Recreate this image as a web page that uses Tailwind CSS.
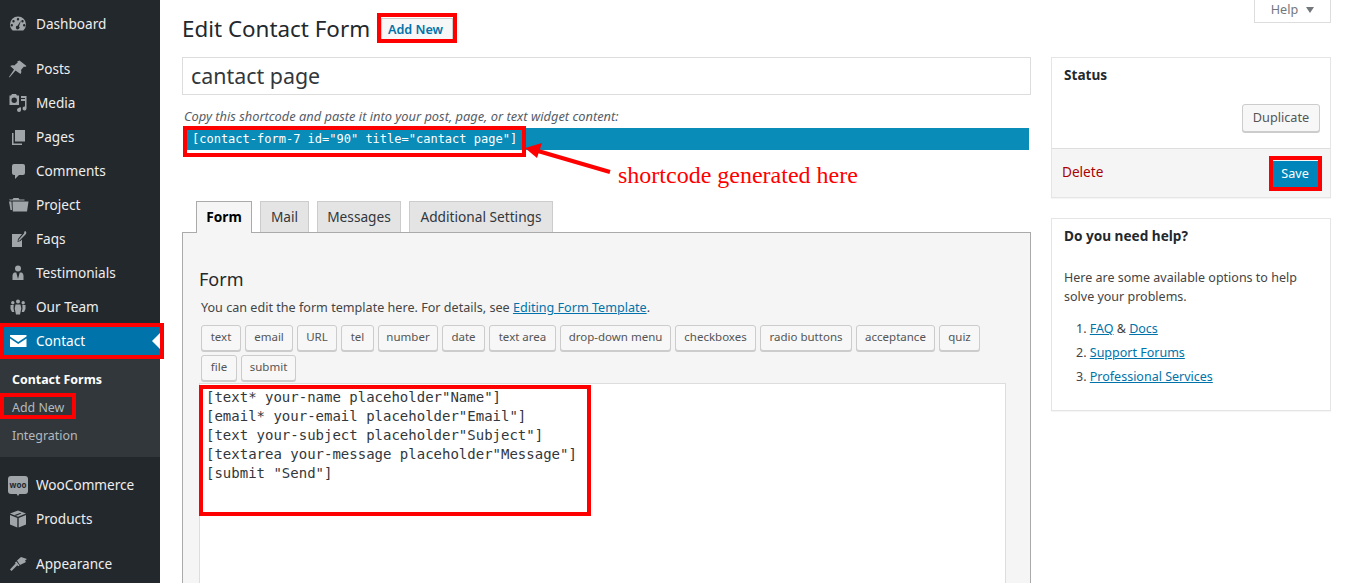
<!DOCTYPE html>
<html lang="en">
<head>
  <meta charset="UTF-8">
  <title>Edit Contact Form</title>
  <script src="https://cdn.jsdelivr.net/npm/@tailwindcss/browser@4"></script>
</head>
<body class="bg-white font-['Noto_Sans',sans-serif] text-[13px] text-[#444]">
<div class="relative w-[1351px] h-[583px] overflow-hidden flex">

  <!-- Sidebar -->
  <nav class="w-[160px] h-full shrink-0 bg-[#23282d] text-[#eee] text-[13.6px] pt-[7px]">
    <a class="flex items-center h-[34px]"><svg class="w-[20px] h-[20px] ml-[8px] mr-[8px] fill-[#a0a5aa]" viewBox="0 0 20 20"><path fill-rule="evenodd" d="M10 2.500a8 8 0 0 0-8 8c0 2.500 1 4.600 2.700 6h10.600a8 8 0 0 0 2.700-6 8 8 0 0 0-8-8zM10 4a1.200 1.200 0 1 1 0 2.400a1.200 1.200 0 0 1 0-2.400zM5.500 6a1.200 1.200 0 1 1 0 2.400a1.200 1.200 0 0 1 0-2.400zM14.500 6a1.200 1.200 0 1 1 0 2.400a1.200 1.200 0 0 1 0-2.400zM3.800 10a1.200 1.200 0 1 1 0 2.400a1.200 1.200 0 0 1 0-2.400zM16.200 10a1.200 1.200 0 1 1 0 2.400a1.200 1.200 0 0 1 0-2.400zM13 6.500l-2 5.800a1.800 1.800 0 1 1-1.500-.5z"/></svg>Dashboard</a>
    <div class="h-[11px]"></div>
    <a class="flex items-center h-[34px]"><svg class="w-[20px] h-[20px] ml-[8px] mr-[8px] fill-[#a0a5aa]" viewBox="0 0 20 20"><path d="M11.500 1.500l7 5.500-1.500 1-1-.5-3 3.500c.5 1.500.5 2.800-.5 4L7.500 11.500 1.500 18.500l-.5-.5 5-7.500-3.800-3.500c1.200-1 2.600-1 4-.5l3.500-3-.5-1z"/></svg>Posts</a>
    <a class="flex items-center h-[34px]"><svg class="w-[20px] h-[20px] ml-[8px] mr-[8px] fill-[#a0a5aa]" viewBox="0 0 20 20"><path fill-rule="evenodd" d="M4 1h4l1 1.500h2V12H1.500V2.500H3zM6.200 4.500a2.700 2.700 0 1 0 0 5.400a2.700 2.700 0 0 0 0-5.400z"/><path d="M13 3h5.500v12.500a2 2 0 1 1-1.500-2V8H13V6h4V5h-4zM13 14.500v2.500a2 2 0 1 1-1.500-2V14z"/></svg>Media</a>
    <a class="flex items-center h-[34px]"><svg class="w-[20px] h-[20px] ml-[8px] mr-[8px] fill-[#a0a5aa]" viewBox="0 0 20 20"><path d="M7 3h10v11.500H7z"/><path d="M4 6h1.500v10.500H14V18H4z"/></svg>Pages</a>
    <a class="flex items-center h-[34px]"><svg class="w-[20px] h-[20px] ml-[8px] mr-[8px] fill-[#a0a5aa]" viewBox="0 0 20 20"><path d="M6 3h9a2 2 0 0 1 2 2v7a2 2 0 0 1-2 2h-4l-4 4v-4H6a2 2 0 0 1-2-2V5a2 2 0 0 1 2-2z"/></svg>Comments</a>
    <a class="flex items-center h-[34px]"><svg class="w-[22px] h-[20px] ml-[7px] mr-[7px] fill-[#a0a5aa]" viewBox="0 0 22 20"><path d="M3 5.500 2 4.500h3.500l1-1.500h5l1 1.500h5v1H3zM2 6.500h2.500L5 15H3.500zM5.500 6.500H21.500L20 16.500H5.800z"/></svg>Project</a>
    <a class="flex items-center h-[34px]"><svg class="w-[20px] h-[20px] ml-[8px] mr-[8px] fill-[#a0a5aa]" viewBox="0 0 20 20"><path d="M4 5h10l-4 5-.5 3 3-1 1.500-1.500V18H4z"/><path d="M17 2a2 2 0 0 1 .5 3.500L11 12l-.800-.800 6-7a2 2 0 0 1 .8-2.200z"/></svg>Faqs</a>
    <a class="flex items-center h-[34px]"><svg class="w-[20px] h-[20px] ml-[8px] mr-[8px] fill-[#a0a5aa]" viewBox="0 0 20 20"><path d="M10 2.500a3 3 0 1 1 0 6a3 3 0 0 1 0-6zM6.500 9.500h1.800L10 16l1.700-6.500h1.800c1.500.5 2 2 2 3.500v4H4.500v-4c0-1.500.5-3 2-3.500z"/></svg>Testimonials</a>
    <a class="flex items-center h-[34px]"><svg class="w-[20px] h-[20px] ml-[8px] mr-[8px] fill-[#a0a5aa]" viewBox="0 0 20 20"><path d="M10 2.500a2 2 0 1 1 0 4a2 2 0 0 1 0-4zM4.800 4a1.700 1.700 0 1 1 0 3.400a1.700 1.700 0 0 1 0-3.400zM15.200 4a1.700 1.700 0 1 1 0 3.400a1.700 1.700 0 0 1 0-3.400zM7.500 7.500h5l.8 4-1.300 6H8l-1.300-6zM2.500 8h3.200l-.2 3.500.8 3.500H4L2.500 12zM14.300 8h3.200v4L16 15h-2.300l.8-3.500z"/></svg>Our Team</a>
    <a class="relative flex items-center h-[34px] bg-[#0073aa] text-white"><svg class="w-[20px] h-[20px] ml-[8px] mr-[8px] fill-white" viewBox="0 0 20 20"><path d="M2 4h16.500v1.500L10.200 11 2 5.500zM2 7.500l8.200 5.500 8.300-5.500V16H2z"/></svg>Contact<span class="absolute right-0 top-[9px] border-y-[8px] border-y-transparent border-r-[8px] border-r-white"></span></a>
    <div class="h-[99px] bg-[#32373c] pt-[8px] text-[12.4px] text-[#b4b9be]">
      <a class="flex items-center h-[28px] pl-[12px] font-bold text-white">Contact Forms</a>
      <a class="flex items-center h-[28px] pl-[12px]">Add New</a>
      <a class="flex items-center h-[28px] pl-[12px]">Integration</a>
    </div>
    <div class="h-[11px]"></div>
    <a class="flex items-center h-[34px]"><span class="relative w-[20px] h-[18px] ml-[8px] mr-[8px] rounded-[3px] bg-[#a0a5aa] text-[#23282d] text-[8px] font-bold leading-[17px] text-center">woo<span class="absolute left-[8px] top-[17px] border-x-[2px] border-x-transparent border-t-[3px] border-t-[#a0a5aa]"></span></span>WooCommerce</a>
    <a class="flex items-center h-[34px]"><svg class="w-[20px] h-[20px] ml-[8px] mr-[8px] fill-[#a0a5aa]" viewBox="0 0 20 20"><path d="M10 1.500l8 3-8 3.300-8-3.300zM2 6l7.300 3v9.500L2 15.500zM18 6v9.500l-7.300 3V9zM12 4l-6 2.300 1.500.7 6-2.400z"/></svg>Products</a>
    <div class="h-[11px]"></div>
    <a class="flex items-center h-[34px]"><svg class="w-[20px] h-[20px] ml-[8px] mr-[8px] fill-[#a0a5aa]" viewBox="0 0 20 20"><path d="M13 3l6 2-2 1.500 1 1.500-6 3-3-4.500zM8.500 7.500l3 4-1.200.8-1-1L3.500 17 2 15.500l5.500-6-.5-1z"/></svg>Appearance</a>
  </nav>

  <!-- Main -->
  <main class="flex-1 pl-[22px] flex gap-[20px] pr-[20px] relative">
    <div class="w-[849px] shrink-0">
      <div class="flex items-center h-[57px] pt-[1px]">
        <h1 class="w-[198px] text-[22.4px] text-[#23282d] leading-none whitespace-nowrap">Edit Contact Form</h1>
        <a class="ml-[1px] mt-[2px] w-[72px] h-[24px] pr-[3px] flex items-center justify-center text-[12.6px] font-semibold text-[#0073aa] bg-[#f7f7f7] border border-[#ccc]">Add New</a>
      </div>
      <div class="h-[38px] border border-[#ddd] flex items-center pl-[8px] text-[21.4px] text-[#32373c] bg-white">cantact page</div>
      <p class="mt-[12px] ml-[2px] text-[12.85px] italic text-[#555d66] leading-[18px]">Copy this shortcode and paste it into your post, page, or text widget content:</p>
      <div class="mx-[2px] h-[22px] mt-[3px] bg-[#0a8cb8] text-white font-['DejaVu_Sans_Mono',monospace] text-[12px] leading-[22px] pl-[8px]">[contact-form-7 id="90" title="cantact page"]</div>

      <!-- Tabs -->
      <div class="flex gap-[8px] pl-[14px] mt-[51px] h-[31px] text-[13.7px] text-[#32373c] relative z-10">
        <a class="w-[56px] h-[32px] flex items-center justify-center border border-[#aaa] border-b-0 bg-[#f5f5f5] font-bold text-black">Form</a>
        <a class="w-[49px] h-[31px] flex items-center justify-center border border-[#ccc] border-b-0 bg-[#e4e4e4]">Mail</a>
        <a class="w-[84px] h-[31px] flex items-center justify-center border border-[#ccc] border-b-0 bg-[#e4e4e4]">Messages</a>
        <a class="w-[144px] h-[31px] flex items-center justify-center border border-[#ccc] border-b-0 bg-[#e4e4e4]">Additional Settings</a>
      </div>
      <section class="h-[400px] border border-[#aaa] bg-[#f5f5f5] pl-[16px] pr-[24px]">
        <h2 class="mt-[33px] text-[18px] leading-[26px] text-[#23282d]">Form</h2>
        <p class="mt-[7px] ml-[2px] text-[12.6px] leading-[18px] text-[#444]">You can edit the form template here. For details, see <a class="text-[#0073aa] underline">Editing Form Template</a>.</p>
        <div class="ml-[2px] mt-[8px] flex flex-wrap gap-x-[4px] gap-y-[4px] text-[11.5px] text-[#555]">
          <a class="w-[40px] h-[26px] pb-[2px] flex items-center justify-center bg-[#f7f7f7] border border-[#ccc] rounded-[3px] shadow-[0_1px_0_#ccc]">text</a>
          <a class="w-[48px] h-[26px] pb-[2px] flex items-center justify-center bg-[#f7f7f7] border border-[#ccc] rounded-[3px] shadow-[0_1px_0_#ccc]">email</a>
          <a class="w-[40px] h-[26px] pb-[2px] flex items-center justify-center bg-[#f7f7f7] border border-[#ccc] rounded-[3px] shadow-[0_1px_0_#ccc]">URL</a>
          <a class="w-[33px] h-[26px] pb-[2px] flex items-center justify-center bg-[#f7f7f7] border border-[#ccc] rounded-[3px] shadow-[0_1px_0_#ccc]">tel</a>
          <a class="w-[60px] h-[26px] pb-[2px] flex items-center justify-center bg-[#f7f7f7] border border-[#ccc] rounded-[3px] shadow-[0_1px_0_#ccc]">number</a>
          <a class="w-[43px] h-[26px] pb-[2px] flex items-center justify-center bg-[#f7f7f7] border border-[#ccc] rounded-[3px] shadow-[0_1px_0_#ccc]">date</a>
          <a class="w-[67px] h-[26px] pb-[2px] flex items-center justify-center bg-[#f7f7f7] border border-[#ccc] rounded-[3px] shadow-[0_1px_0_#ccc]">text area</a>
          <a class="w-[111px] h-[26px] pb-[2px] flex items-center justify-center bg-[#f7f7f7] border border-[#ccc] rounded-[3px] shadow-[0_1px_0_#ccc]">drop-down menu</a>
          <a class="w-[81px] h-[26px] pb-[2px] flex items-center justify-center bg-[#f7f7f7] border border-[#ccc] rounded-[3px] shadow-[0_1px_0_#ccc]">checkboxes</a>
          <a class="w-[92px] h-[26px] pb-[2px] flex items-center justify-center bg-[#f7f7f7] border border-[#ccc] rounded-[3px] shadow-[0_1px_0_#ccc]">radio buttons</a>
          <a class="w-[79px] h-[26px] pb-[2px] flex items-center justify-center bg-[#f7f7f7] border border-[#ccc] rounded-[3px] shadow-[0_1px_0_#ccc]">acceptance</a>
          <a class="w-[41px] h-[26px] pb-[2px] flex items-center justify-center bg-[#f7f7f7] border border-[#ccc] rounded-[3px] shadow-[0_1px_0_#ccc]">quiz</a>
          <a class="w-[36px] h-[26px] pb-[2px] flex items-center justify-center bg-[#f7f7f7] border border-[#ccc] rounded-[3px] shadow-[0_1px_0_#ccc]">file</a>
          <a class="w-[55px] h-[26px] pb-[2px] flex items-center justify-center bg-[#f7f7f7] border border-[#ccc] rounded-[3px] shadow-[0_1px_0_#ccc]">submit</a>
        </div>
        <pre class="mt-[2px] h-[300px] bg-white border border-[#ddd] pl-[6px] pt-[4px] font-['DejaVu_Sans_Mono',monospace] text-[14px] leading-[19px] text-[#32373c]">[text* your-name placeholder"Name"]
[email* your-email placeholder"Email"]
[text your-subject placeholder"Subject"]
[textarea your-message placeholder"Message"]
[submit "Send"]</pre>
      </section>
    </div>

    <!-- Right column -->
    <aside class="w-[280px] shrink-0">
      <div class="flex justify-end h-[57px]">
        <div class="w-[77px] h-[23px] pb-[2px] border border-t-0 border-[#ddd] flex items-center justify-center gap-[8px] text-[12.6px] text-[#72777c]">Help<span class="border-x-[4.5px] border-x-transparent border-t-[6px] border-t-[#72777c]"></span></div>
      </div>
      <div class="h-[141px] border border-[#e5e5e5] shadow-[0_1px_1px_rgba(0,0,0,0.04)] flex flex-col">
        <h3 class="pl-[12px] pt-[8px] text-[13.6px] font-bold leading-[18px] text-[#23282d]">Status</h3>
        <div class="flex justify-end pr-[10px] mt-[20px]">
          <a class="w-[78px] h-[28px] pb-[1px] flex items-center justify-center bg-[#f7f7f7] border border-[#ccc] rounded-[3px] shadow-[0_1px_0_#ccc] text-[12.7px] text-[#555]">Duplicate</a>
        </div>
        <div class="mt-auto h-[49px] bg-[#f5f5f5] border-t border-[#ddd] flex items-center justify-between pl-[10px] pr-[12px]">
          <a class="pb-[2px] text-[13.6px] text-[#a00]">Delete</a>
          <a class="w-[46px] h-[27px] mt-[2px] flex items-center justify-center bg-[#0085ba] text-white text-[12.6px]">Save</a>
        </div>
      </div>
      <div class="mt-[20px] h-[193px] border border-[#e5e5e5] shadow-[0_1px_1px_rgba(0,0,0,0.04)] pl-[12px]">
        <h3 class="pt-[8px] text-[13.6px] font-bold leading-[18px] text-[#23282d]">Do you need help?</h3>
        <p class="mt-[23px] text-[12.5px] leading-[19px] text-[#444] w-[255px]">Here are some available options to help solve your problems.</p>
        <ol class="mt-[11px] ml-[12px] text-[12.5px] leading-[24px]">
          <li>1. <a class="text-[#0073aa] underline">FAQ</a> &amp; <a class="text-[#0073aa] underline">Docs</a></li>
          <li>2. <a class="text-[#0073aa] underline">Support Forums</a></li>
          <li>3. <a class="text-[#0073aa] underline">Professional Services</a></li>
        </ol>
      </div>
    </aside>
  </main>

  <!-- Red annotations drawn over the screenshot -->
  <div class="absolute left-[377px] top-[13px] w-[80px] h-[30px] border-[4px] border-[#f00]"></div>
  <div class="absolute left-[183px] top-[126px] w-[343px] h-[31px] border-[4px] border-[#f00]"></div>
  <div class="absolute left-0 top-[323px] w-[164px] h-[36px] border-[4px] border-[#f00]"></div>
  <div class="absolute left-0 top-[393px] w-[76px] h-[26px] border-[4px] border-[#f00]"></div>
  <div class="absolute left-[199px] top-[385px] w-[392px] h-[131px] border-[4px] border-[#f00]"></div>
  <div class="absolute left-[1269px] top-[156px] w-[53px] h-[35px] border-[4px] border-[#f00]"></div>
  <svg class="absolute left-[520px] top-[140px] w-[95px] h-[40px]" viewBox="0 0 95 40"><path d="M18 11 90 32" stroke="#f00" stroke-width="4"/><path d="M5 8 22 3 17 18z" fill="#f00"/></svg>
  <span class="absolute left-[618px] top-[160px] font-['Liberation_Serif',serif] text-[24px] leading-[30px] text-[#f00]">shortcode generated here</span>
</div>
</body>
</html>
